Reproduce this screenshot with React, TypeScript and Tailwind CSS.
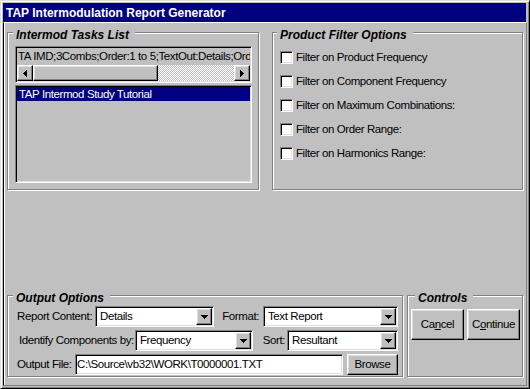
import type { ReactNode } from "react";

const sunken =
  "border border-t-[#808080] border-l-[#808080] border-r-white border-b-white shadow-[inset_1px_1px_0_#000,inset_-1px_-1px_0_#dfdfdf]";
const raised =
  "border border-t-white border-l-white border-r-black border-b-black shadow-[inset_-1px_-1px_0_#808080,inset_1px_1px_0_#dfdfdf] bg-[#c0c0c0]";

function Group({
  title,
  className,
  titleClass = "left-[5px]",
  children,
}: {
  title: string;
  className: string;
  titleClass?: string;
  children?: ReactNode;
}) {
  return (
    <div
      className={`relative border border-[#808080] shadow-[inset_1px_1px_0_#fff,1px_1px_0_#fff] ${className}`}
    >
      <span
        className={`absolute top-[-5px] ${titleClass} bg-[#c0c0c0] pl-[3px] pr-[6px] text-[12px] leading-[14px] tracking-normal font-bold italic font-['Liberation_Sans',sans-serif] whitespace-nowrap`}
      >
        {title}
      </span>
      {children}
    </div>
  );
}

function DownArrow() {
  return (
    <svg width="7" height="4" shapeRendering="crispEdges">
      <polygon points="0,0 7,0 3.5,4" fill="#000" />
    </svg>
  );
}

function Combo({ value, className }: { value: string; className: string }) {
  return (
    <div className={`${sunken} bg-white p-px flex h-[21px] ${className}`}>
      <span className="flex-1 pl-[3px] leading-[17px] whitespace-nowrap overflow-hidden">
        {value}
      </span>
      <span className={`${raised} w-[16px] flex items-center justify-center`}>
        <DownArrow />
      </span>
    </div>
  );
}

function ScrollBar() {
  return (
    <div className="flex h-[16px]">
      <span className={`${raised} w-[16px] flex items-center justify-center`}>
        <svg width="4" height="7" shapeRendering="crispEdges">
          <polygon points="4,0 4,7 0,3.5" fill="#000" />
        </svg>
      </span>
      <span className={`${raised} w-[125px]`} />
      <span className="flex-1 bg-[image:repeating-conic-gradient(#fff_0_25%,#c0c0c0_0_50%)] bg-[length:2px_2px]" />
      <span className={`${raised} w-[16px] flex items-center justify-center`}>
        <svg width="4" height="7" shapeRendering="crispEdges">
          <polygon points="0,0 0,7 4,3.5" fill="#000" />
        </svg>
      </span>
    </div>
  );
}

const filters = [
  "Filter on Product Frequency",
  "Filter on Component Frequency",
  "Filter on Maximum Combinations:",
  "Filter on Order Range:",
  "Filter on Harmonics Range:",
];

function App() {
  return (
    <div className="w-[530px] h-[389px] bg-[#c0c0c0] border border-t-[#dfdfdf] border-l-[#dfdfdf] border-r-black border-b-black shadow-[inset_1px_1px_0_#fff,inset_-1px_-1px_0_#808080] p-[2px] flex flex-col text-[11.5px] tracking-[-0.4px] text-black font-['Liberation_Sans',sans-serif]">
      <div className="h-[19px] mr-px bg-[#000080] text-white font-bold text-[12px] tracking-normal pl-[3px] flex items-center">
        TAP Intermodulation Report Generator
      </div>
      <main className="flex-1 border border-t-white border-l-black border-r-[#808080] border-b-[#808080] shadow-[inset_1px_0_0_#fff] pl-[3px] pt-[9px] flex flex-col">
        <section className="flex gap-[13px]">
          <Group title="Intermod Tasks List" className="w-[252px] h-[158px]">
            <div className={`${sunken} p-px ml-[7px] mt-[13px] w-[237px] h-[37px] flex flex-col`}>
              <div className="h-[17px] pl-px leading-[17px] whitespace-nowrap overflow-hidden">
                TA IMD;3Combs;Order:1 to 5;TextOut:Details;Order:Ascending
              </div>
              <ScrollBar />
            </div>
            <div className={`${sunken} p-px ml-[7px] mt-[2px] w-[237px] h-[98px]`}>
              <div className="h-[14px] leading-[14px] bg-[#000080] text-white pl-[2px] whitespace-nowrap">
                TAP Intermod Study Tutorial
              </div>
            </div>
          </Group>
          <Group title="Product Filter Options" className="w-[251px] h-[158px]" titleClass="left-[4px]">
            <div className="pl-[7px] pt-[18px] flex flex-col gap-[11px]">
              {filters.map((f) => (
                <label key={f} className="flex items-center h-[13px] gap-[3px]">
                  <span className={`${sunken} bg-white w-[13px] h-[13px]`} />
                  <span className="leading-[13px] whitespace-nowrap">{f}</span>
                </label>
              ))}
            </div>
          </Group>
        </section>
        <section className="flex gap-[4px] mt-[105px]">
          <Group title="Output Options" className="w-[396px] h-[82px]">
            <div className="pl-[9px] pt-[10px] flex flex-col gap-[3px]">
              <div className="flex items-center h-[21px]">
                <span className="w-[78px] whitespace-nowrap">Report Content:</span>
                <Combo value="Details" className="w-[119px]" />
                <span className="w-[49px] text-right pr-[4px]">Format:</span>
                <Combo value="Text Report" className="w-[135px]" />
              </div>
              <div className="flex items-center h-[21px]">
                <span className="w-[118px] pl-[2px] whitespace-nowrap">Identify Components by:</span>
                <Combo value="Frequency" className="w-[118px]" />
                <span className="w-[34px] text-right pr-[2px]">Sort:</span>
                <Combo value="Resultant" className="w-[111px]" />
              </div>
              <div className="flex items-center h-[21px]">
                <span className="w-[58px] whitespace-nowrap">Output File:</span>
                <div className={`${sunken} bg-white p-px w-[268px] h-[21px] pl-[1px] leading-[17px] whitespace-nowrap overflow-hidden`}>
                  C:\Source\vb32\WORK\T0000001.TXT
                </div>
                <button className={`${raised} ml-[4px] w-[51px] h-[21px] leading-[17px]`}>
                  Browse
                </button>
              </div>
            </div>
          </Group>
          <Group title="Controls" className="w-[116px] h-[82px]" titleClass="left-[7px]">
            <div className="pl-[3px] pt-[13px] flex gap-[3px]">
              <button className={`${raised} w-[53px] h-[31px]`}>
                Ca<span className="underline">n</span>cel
              </button>
              <button className={`${raised} w-[53px] h-[31px]`}>
                C<span className="underline">o</span>ntinue
              </button>
            </div>
          </Group>
        </section>
      </main>
    </div>
  );
}

export default App;
